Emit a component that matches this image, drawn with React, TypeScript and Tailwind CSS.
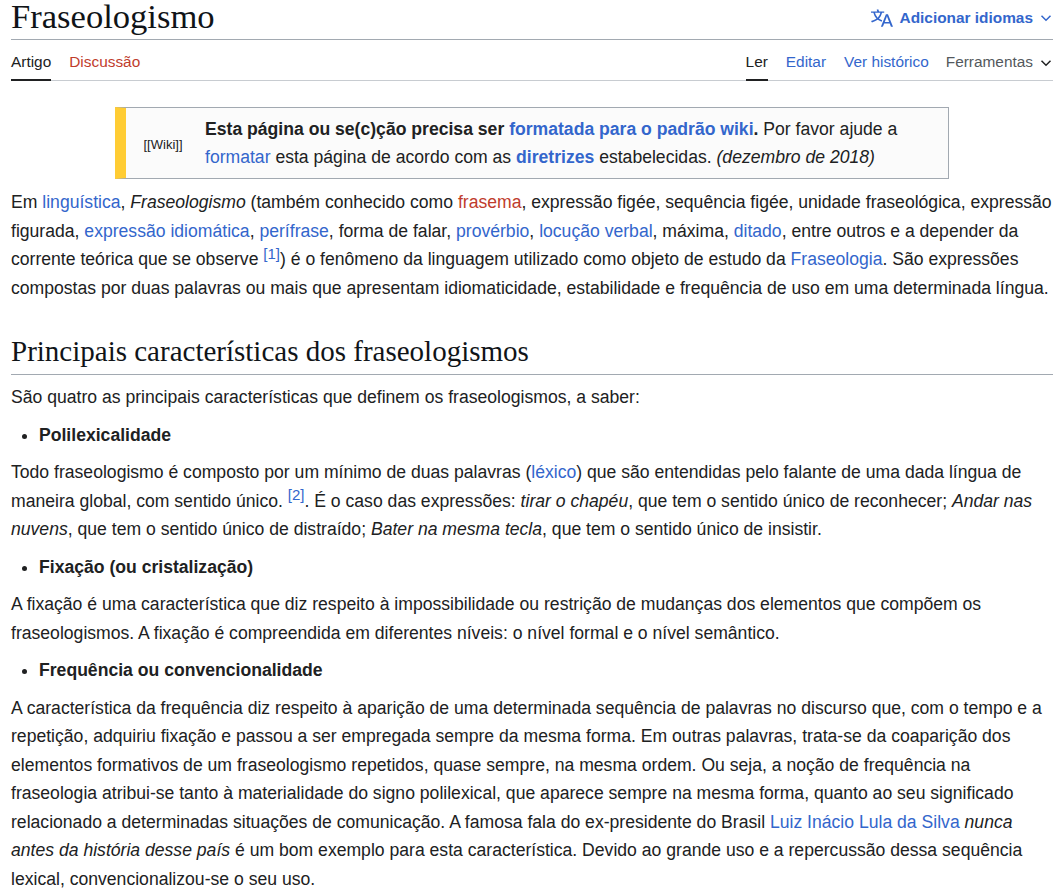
import type { ReactNode } from 'react'

const sans = "[font-family:'Liberation_Sans',Arial,sans-serif]"

function A({ children }: { children: ReactNode }) {
  return <a className="text-[#3366cc]">{children}</a>
}

function Red({ children }: { children: ReactNode }) {
  return <a className="text-[#bf3c2c]">{children}</a>
}

function Ref({ n }: { n: number }) {
  return <sup className="text-[#3366cc] text-[15px] leading-none top-[-6.7px]">[{n}]</sup>
}

function Chevron({ className }: { className: string }) {
  return (
    <svg viewBox="0 0 12 12" className={className} fill="none" stroke="currentColor" strokeWidth="1.5">
      <path d="M1.5 3.8 6 8.3l4.5-4.5" />
    </svg>
  )
}

function Bullet({ children }: { children: ReactNode }) {
  return (
    <ul className="list-disc pl-[28px] mb-[8.8px]">
      <li className="font-bold">{children}</li>
    </ul>
  )
}

export default function App() {
  return (
    <div className={`${sans} bg-white text-[#202122] text-[17.6px] leading-[28.6px] pl-[11px] w-[1053px] min-h-[895px] overflow-hidden`}>
      <header className="flex justify-between h-[40px] border-b border-[#a2a9b1]">
        <h1 className="font-['Liberation_Serif',serif] text-[34.6px] leading-[33px] h-[39px] pb-[6px] box-content text-[#101418]">Fraseologismo</h1>
        <button className="flex items-center h-[36px] text-[#3366cc] font-bold text-[15.4px] mr-[1px]">
          <svg viewBox="0 0 20 20" className="w-[22px] h-[22px] mr-[7px]" fill="currentColor">
            <path d="M20 18h-1.44a.6.6 0 01-.4-.12.8.8 0 01-.23-.31L17 15h-5l-1 2.54a.8.8 0 01-.22.3.6.6 0 01-.4.14H9l4.55-11.47h1.89zm-3.53-4.31L14.89 9.5a12 12 0 01-.39-1.24q-.09.37-.19.69l-.19.56-1.58 4.19zm-6.3-1.58a13.4 13.4 0 01-2.91-1.41 11.46 11.46 0 002.81-5.37H12V4H7.31a4 4 0 00-.2-.56C6.87 2.79 6.6 2 6.6 2l-1.47.5s.4.89.6 1.5H0v1.33h2.15A11.23 11.23 0 005 10.7a17.2 17.2 0 01-5 2.1q.56.82.87 1.38a23.3 23.3 0 005.22-2.51 15.6 15.6 0 003.56 1.77zM3.63 5.33h4.91a8.1 8.1 0 01-2.45 4.45 9.1 9.1 0 01-2.46-4.45" />
          </svg>
          Adicionar idiomas
          <Chevron className="w-[12px] h-[12px] ml-[7px]" />
        </button>
      </header>

      <nav className="flex justify-between h-[41px] border-b border-[#c8ccd1] text-[15.4px]">
        <div className="flex gap-[18px]">
          <a className="h-[41px] border-b-2 border-[#202122] pt-[8px]">Artigo</a>
          <a className="pt-[8px] text-[#bf3c2c]">Discussão</a>
        </div>
        <div className="flex">
          <a className="h-[41px] border-b-2 border-[#202122] pt-[8px] mr-[18px]">Ler</a>
          <a className="pt-[8px] text-[#3366cc] mr-[18px]">Editar</a>
          <a className="pt-[8px] text-[#3366cc] mr-[17px]">Ver histórico</a>
          <span className="flex items-start pt-[8px] text-[#54595d]">
            Ferramentas
            <Chevron className="w-[12px] h-[12px] ml-[7px] mt-[9px] mr-[1px] text-[#202122]" />
          </span>
        </div>
      </nav>

      <div className="flex items-center w-[834px] h-[72px] mt-[26px] mb-[9px] ml-[104px] bg-[#fbfbfb] border border-[#a2a9b1] border-l-[11px] border-l-[#ffcc33]">
        <div className="w-[74px] mr-[5px] text-center text-[13px] leading-none shrink-0 pt-[2px]">[[Wiki]]</div>
        <div className="leading-[28px]">
          <b>Esta página ou se(c)ção precisa ser <A>formatada para o padrão wiki</A>.</b> Por favor ajude a
          <br />
          <A>formatar</A> esta página de acordo com as <b><A>diretrizes</A></b> estabelecidas. <i>(dezembro de 2018)</i>
        </div>
      </div>

      <p>
        Em <A>linguística</A>, <i>Fraseologismo</i> (também conhecido como <Red>frasema</Red>, expressão figée, sequência figée, unidade fraseológica, expressão figurada, <A>expressão idiomática</A>, <A>perífrase</A>, forma de falar, <A>provérbio</A>, <A>locução verbal</A>, máxima, <A>ditado</A>, entre outros e a depender da corrente teórica que se observe <Ref n={1} />) é o fenômeno da linguagem utilizado como objeto de estudo da <A>Fraseologia</A>. São expressões compostas por duas palavras ou mais que apresentam idiomaticidade, estabilidade e frequência de uso em uma determinada língua.
      </p>

      <h2 className="font-['Liberation_Serif',serif] text-[29px] leading-[36px] text-[#101418] border-b border-[#a2a9b1] mt-[31px] mb-[8px] pb-[5px]">Principais características dos fraseologismos</h2>

      <p className="mb-[8.8px]">São quatro as principais características que definem os fraseologismos, a saber:</p>

      <Bullet>Polilexicalidade</Bullet>
      <p className="mb-[8.8px]">
        Todo fraseologismo é composto por um mínimo de duas palavras (<A>léxico</A>) que são entendidas pelo falante de uma dada língua de maneira global, com sentido único. <Ref n={2} />. É o caso das expressões: <i>tirar o chapéu</i>, que tem o sentido único de reconhecer; <i>Andar nas nuvens</i>, que tem o sentido único de distraído; <i>Bater na mesma tecla</i>, que tem o sentido único de insistir.
      </p>

      <Bullet>Fixação (ou cristalização)</Bullet>
      <p className="mb-[8.8px]">
        A fixação é uma característica que diz respeito à impossibilidade ou restrição de mudanças dos elementos que compõem os fraseologismos. A fixação é compreendida em diferentes níveis: o nível formal e o nível semântico.
      </p>

      <Bullet>Frequência ou convencionalidade</Bullet>
      <p>
        A característica da frequência diz respeito à aparição de uma determinada sequência de palavras no discurso que, com o tempo e a repetição, adquiriu fixação e passou a ser empregada sempre da mesma forma. Em outras palavras, trata-se da coaparição dos elementos formativos de um fraseologismo repetidos, quase sempre, na mesma ordem. Ou seja, a noção de frequência na fraseologia atribui-se tanto à materialidade do signo polilexical, que aparece sempre na mesma forma, quanto ao seu significado relacionado a determinadas situações de comunicação. A famosa fala do ex-presidente do Brasil <A>Luiz Inácio Lula da Silva</A> <i>nunca antes da história desse país</i> é um bom exemplo para esta característica. Devido ao grande uso e a repercussão dessa sequência lexical, convencionalizou-se o seu uso.
      </p>
    </div>
  )
}
